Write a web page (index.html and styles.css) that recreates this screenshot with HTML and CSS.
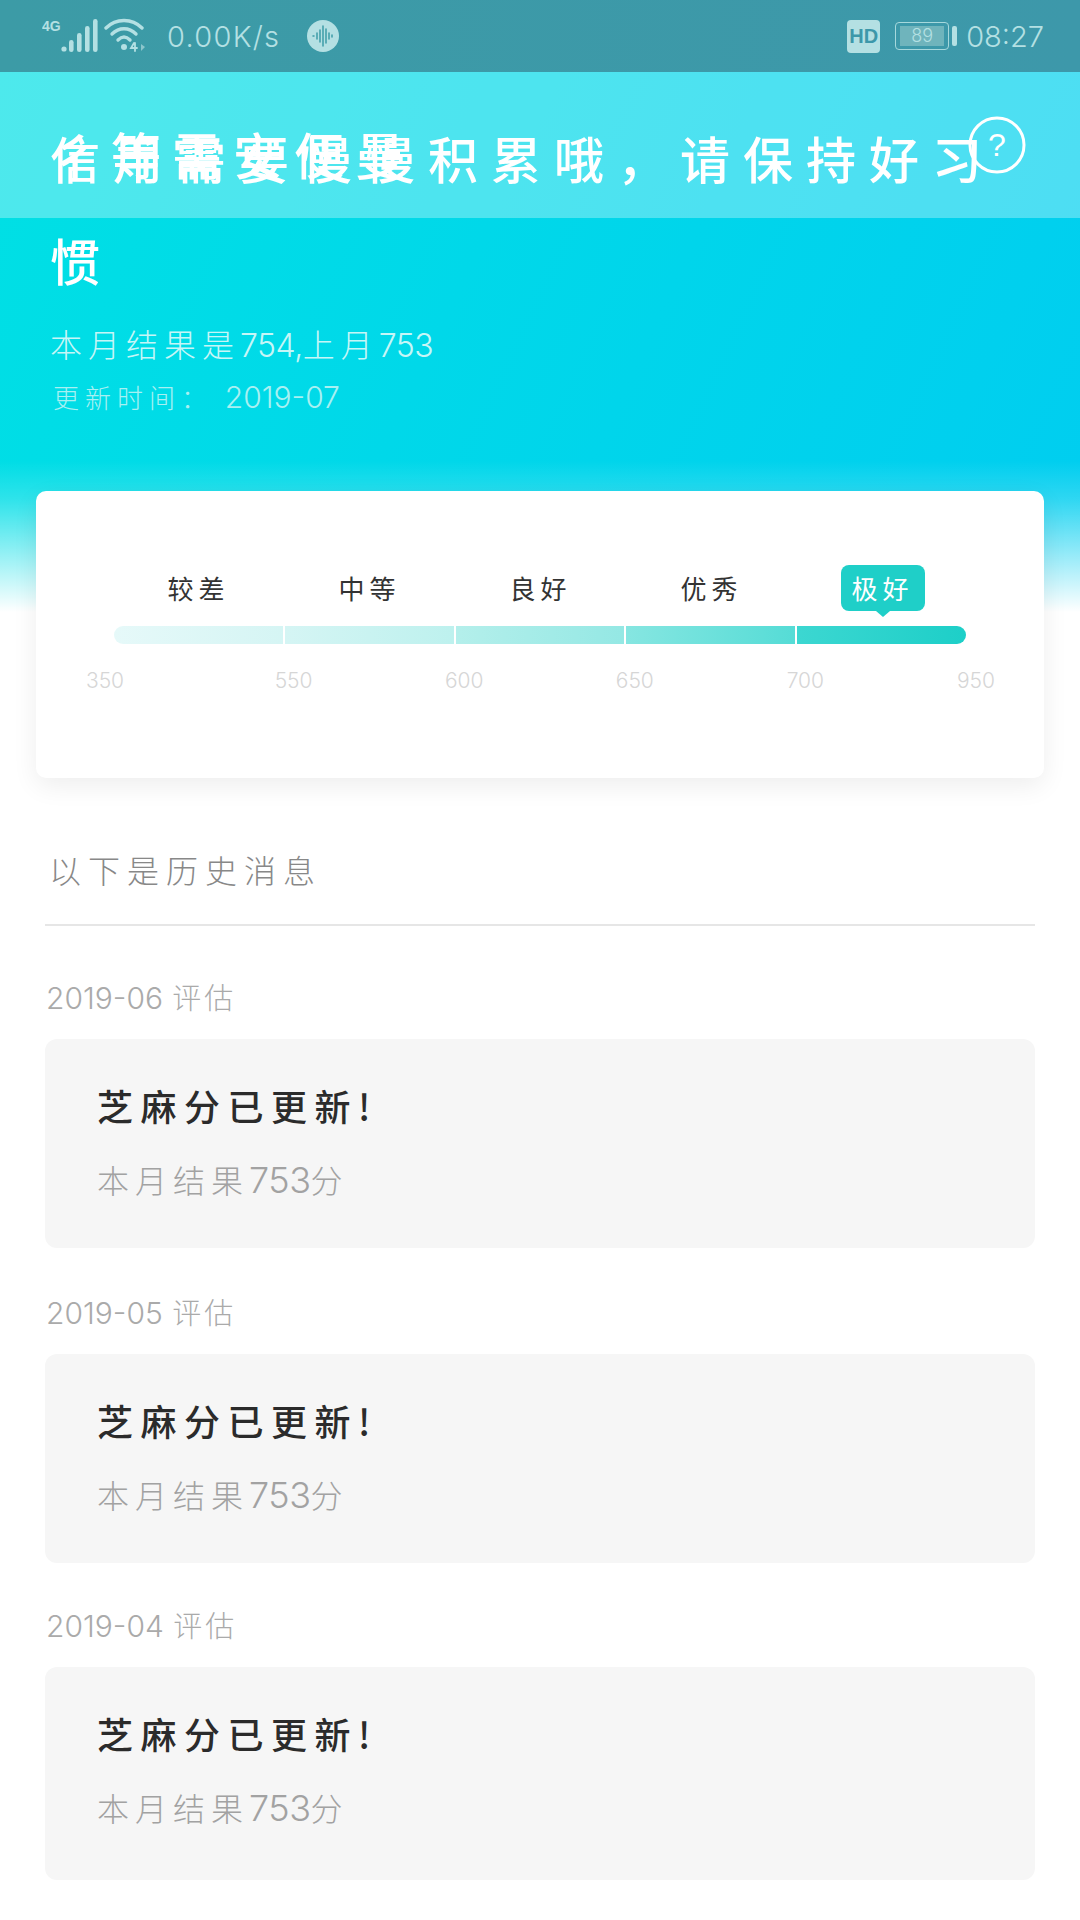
FILE: index.html
```html
<!DOCTYPE html>
<html>
  <head>
    <meta charset="utf-8" />
    <title>信用评估</title>
    <link rel="stylesheet" href="styles.css">
  </head>
  <body>
    <div class="status">
      <div class="status-left">
        <svg class="sig" width="58" height="36" viewBox="0 0 58 36">
          <text x="0" y="12" class="sig-4g">4G</text>
          <circle cx="22" cy="30" r="2.6" fill="#b4e0e3" />
          <rect x="27" y="21" width="4.6" height="12" rx="2.3" fill="#b4e0e3" />
          <rect x="35" y="14" width="4.6" height="19" rx="2.3" fill="#b4e0e3" />
          <rect x="43" y="7" width="4.6" height="26" rx="2.3" fill="#b4e0e3" />
          <rect x="51" y="0" width="4.6" height="33" rx="2.3" fill="#b4e0e3" />
        </svg>
        <svg class="wifi" width="42" height="34" viewBox="0 0 42 34" fill="none" stroke="#b4e0e3" stroke-width="3.4" stroke-linecap="round">
          <path d="M2 10 C12 0 28 0 38 10" />
          <path d="M8 16 C15 9 25 9 32 16" />
          <path d="M14 22 C18 18 22 18 26 22" />
          <circle cx="20" cy="29" r="3" fill="#b4e0e3" stroke="none" />
          <path d="M30 25 L27 30 H33 M31 25 V33" stroke-width="1.8" />
          <path d="M37 26 L41 29 L37 33 Z" fill="#8cc6cc" stroke="none" />
        </svg>
        <span class="speed">0.00K/s</span>
        <svg class="voice" width="32" height="32" viewBox="0 0 32 32">
          <circle cx="16" cy="16" r="16" fill="#b4e0e3" />
          <path d="M6 16 H7 M10 13 V19 M13 10 V22 M16 6 V26 M19 9 V23 M22 13 V19 M25 15 V17" stroke="#3d9ca8" stroke-width="1.5" stroke-linecap="round" />
        </svg>
      </div>
      <div class="status-right">
        <span class="hd">HD</span>
        <span class="batt"><span class="batt-num">89</span></span>
        <span class="batt-tip"></span>
        <span class="clock">08:27</span>
      </div>
    </div>

    <div class="hero">
      <div class="band"></div>
      <svg class="help" width="60" height="60" viewBox="0 0 60 60" fill="none">
        <circle cx="30" cy="30" r="27" stroke="#fff" stroke-width="3" />
        <text x="30" y="41" class="help-mark">?</text>
      </svg>
      <h1 class="headline"><span class="ghost">彳等需安便曼</span>信用需要慢慢积累哦，请保持好习惯</h1>
      <p class="compare">本月结果是<span class="num">754,</span>上月<span class="num">753</span></p>
      <p class="updated">更新时间： <span class="num">2019-07</span></p>
    </div>

    <div class="card">
      <div class="levels">
        <span class="level">较差</span>
        <span class="level">中等</span>
        <span class="level">良好</span>
        <span class="level">优秀</span>
        <span class="level level-on">极好</span>
      </div>
      <div class="track">
        <span class="seg seg-1"></span>
        <span class="seg seg-2"></span>
        <span class="seg seg-3"></span>
        <span class="seg seg-4"></span>
        <span class="seg seg-5"></span>
      </div>
      <div class="scale">
        <span>350</span><span>550</span><span>600</span><span>650</span><span>700</span><span>950</span>
      </div>
    </div>

    <div class="history">
      <h2 class="history-title">以下是历史消息</h2>

      <div class="item">
        <div class="item-date"><span class="num">2019-06</span> 评估</div>
        <div class="box">
          <div class="box-title">芝麻分已更新!</div>
          <div class="box-sub">本月结果<span class="num">753</span>分</div>
        </div>
      </div>

      <div class="item">
        <div class="item-date"><span class="num">2019-05</span> 评估</div>
        <div class="box">
          <div class="box-title">芝麻分已更新!</div>
          <div class="box-sub">本月结果<span class="num">753</span>分</div>
        </div>
      </div>

      <div class="item">
        <div class="item-date"><span class="num">2019-04</span> 评估</div>
        <div class="box box-last">
          <div class="box-title">芝麻分已更新!</div>
          <div class="box-sub">本月结果<span class="num">753</span>分</div>
        </div>
      </div>
    </div>
  </body>
</html>
```

FILE: styles.css
```css
* {
  box-sizing: border-box;
}

body {
  margin: 0;
  width: 1080px;
  height: 1920px;
  overflow: hidden;
  background-color: #fff;
  font-family: "Noto Sans CJK SC", "Noto Sans", sans-serif;
  font-weight: 300;
  color: #333;
}

.num {
  font-family: Inter, "Liberation Sans", sans-serif;
  font-weight: 300;
  letter-spacing: 0;
}

/* status bar */
.status {
  height: 72px;
  padding: 0 36px 0 42px;
  display: flex;
  justify-content: space-between;
  align-items: center;
  background: linear-gradient(90deg, #3c9ba6, #3d98aa);
  color: #b4e0e3;
}

.status-left,
.status-right {
  display: flex;
  align-items: center;
}

.sig {
  margin-top: 2px;
}

.sig-4g {
  font-family: "Liberation Sans", sans-serif;
  font-size: 14px;
  font-weight: 700;
  fill: #b4e0e3;
}

.wifi {
  margin-left: 4px;
  margin-top: -2px;
}

.speed {
  margin-left: 21px;
  font-family: Inter, sans-serif;
  font-weight: 300;
  font-size: 29px;
  letter-spacing: 1.3px;
}

.voice {
  margin-left: 27px;
}

.hd {
  width: 33px;
  height: 33px;
  border-radius: 4px;
  background-color: #b4e0e3;
  color: #3d98aa;
  font-family: "Liberation Sans", sans-serif;
  font-weight: 700;
  font-size: 20px;
  line-height: 33px;
  text-align: center;
}

.batt {
  margin-left: 15px;
  width: 54px;
  height: 28px;
  padding: 3px 8px;
  border: 1.5px solid #a6d8dc;
  border-radius: 4px;
}

.batt-num {
  display: block;
  height: 20px;
  background-color: #6fb4bc;
  font-family: Inter, sans-serif;
  font-weight: 300;
  font-size: 18px;
  line-height: 20px;
  text-align: center;
  margin: 0 -4px;
}

.batt-tip {
  margin-left: 3px;
  width: 5px;
  height: 20px;
  border-radius: 2px;
  background-color: #b4e0e3;
}

.clock {
  margin-left: 9px;
  font-family: Inter, sans-serif;
  font-weight: 300;
  font-size: 29px;
}

/* top coloured area */
.hero {
  position: relative;
  height: 540px;
  padding: 34px 0 0 50px;
  background:
    linear-gradient(180deg, rgba(255, 255, 255, 0) 72%, rgba(255, 255, 255, 0.18) 79%, #fff 100%),
    linear-gradient(115deg, #00e0e4, #00cdf0);
  color: #fff;
}

.band {
  position: absolute;
  left: 0;
  top: 0;
  width: 100%;
  height: 146px;
  background-color: rgba(255, 255, 255, 0.3);
}

.help {
  position: absolute;
  right: 53px;
  top: 43px;
}

.help-mark {
  font-family: "Liberation Sans", sans-serif;
  font-size: 32px;
  text-anchor: middle;
  fill: #fff;
}

.headline {
  position: relative;
  width: 980px;
  margin: 0;
  font-size: 50px;
  font-weight: 500;
  line-height: 102px;
  letter-spacing: 13px;
}

.ghost {
  position: absolute;
  left: 0;
  top: -4px;
  letter-spacing: 11px;
}

.compare {
  margin: 11px 0 0;
  font-size: 32px;
  line-height: 44px;
  letter-spacing: 6px;
  color: #c6f6f7;
}

.updated {
  margin: 9px 0 0 3px;
  font-size: 26px;
  line-height: 40px;
  letter-spacing: 6px;
  color: #a8f0f2;
}

.updated .num {
  font-size: 30px;
}

.compare .num {
  letter-spacing: -0.5px;
}

/* score card */
.card {
  position: relative;
  width: 1008px;
  height: 287px;
  margin: -121px 0 0 36px;
  padding-top: 74px;
  background-color: #fff;
  border-radius: 10px;
  box-shadow: 0 8px 26px rgba(0, 0, 0, 0.07);
}

.levels {
  margin-left: 77px;
  display: grid;
  grid-template-columns: repeat(5, 171px);
  height: 46px;
}

.level {
  text-align: center;
  font-size: 26px;
  line-height: 46px;
  letter-spacing: 5px;
  font-weight: 400;
  color: #333;
}

.level-on {
  position: relative;
  justify-self: center;
  width: 84px;
  background-color: #1fcfc8;
  border-radius: 8px;
  color: #fff;
}

.level-on::after {
  content: "";
  position: absolute;
  left: 35px;
  bottom: -6px;
  border-left: 7px solid transparent;
  border-right: 7px solid transparent;
  border-top: 6px solid #1fcfc8;
}

.track {
  margin: 15px 78px 0;
  display: flex;
  gap: 2px;
  height: 18px;
}

.seg {
  flex: 1;
}

.seg-1 {
  border-radius: 9px 0 0 9px;
  background: linear-gradient(90deg, #e6f9f9, #d5f5f4);
}

.seg-2 {
  background: linear-gradient(90deg, #d5f5f4, #bdf1ee);
}

.seg-3 {
  background: linear-gradient(90deg, #b4efeb, #94e8e4);
}

.seg-4 {
  background: linear-gradient(90deg, #86e6e1, #55dcd6);
}

.seg-5 {
  border-radius: 0 9px 9px 0;
  background: linear-gradient(90deg, #3cd7d1, #1dcfc8);
}

.scale {
  margin: 23px 0 0 39px;
  display: flex;
  gap: 110.6px;
  font-family: Inter, sans-serif;
  font-weight: 300;
  font-size: 21px;
  line-height: 28px;
  color: #d6d6d6;
}

.scale span {
  width: 60px;
  text-align: center;
}

.scale span:first-child {
  margin-right: 18px;
}

/* history list */
.history {
  padding: 0 45px;
}

.history-title {
  margin: 65px 0 0;
  height: 83px;
  padding-left: 4px;
  border-bottom: 2px solid #e6e6e6;
  font-size: 32px;
  font-weight: 300;
  line-height: 52px;
  letter-spacing: 7px;
  color: #888;
}

.item-date {
  height: 62px;
  padding-left: 1px;
  font-size: 29px;
  line-height: 38px;
  letter-spacing: 3px;
  color: #aaa;
}

.item-date .num {
  font-size: 30px;
}

.item {
  margin-top: 44px;
}

.item:first-of-type {
  margin-top: 51px;
}

.item:last-of-type {
  margin-top: 42px;
}

.box {
  height: 209px;
  padding: 40px 0 0 52px;
  background-color: #f6f6f6;
  border-radius: 12px;
}

.box-last {
  height: 213px;
}

.box-title {
  font-size: 36px;
  font-weight: 500;
  line-height: 52px;
  letter-spacing: 7.5px;
  color: #2b2b2b;
}

.box-sub {
  margin-top: 26px;
  font-size: 32px;
  line-height: 44px;
  letter-spacing: 6px;
  color: #a2a2a2;
}

.box-sub .num {
  font-size: 36px;
  letter-spacing: -0.5px;
}
```
